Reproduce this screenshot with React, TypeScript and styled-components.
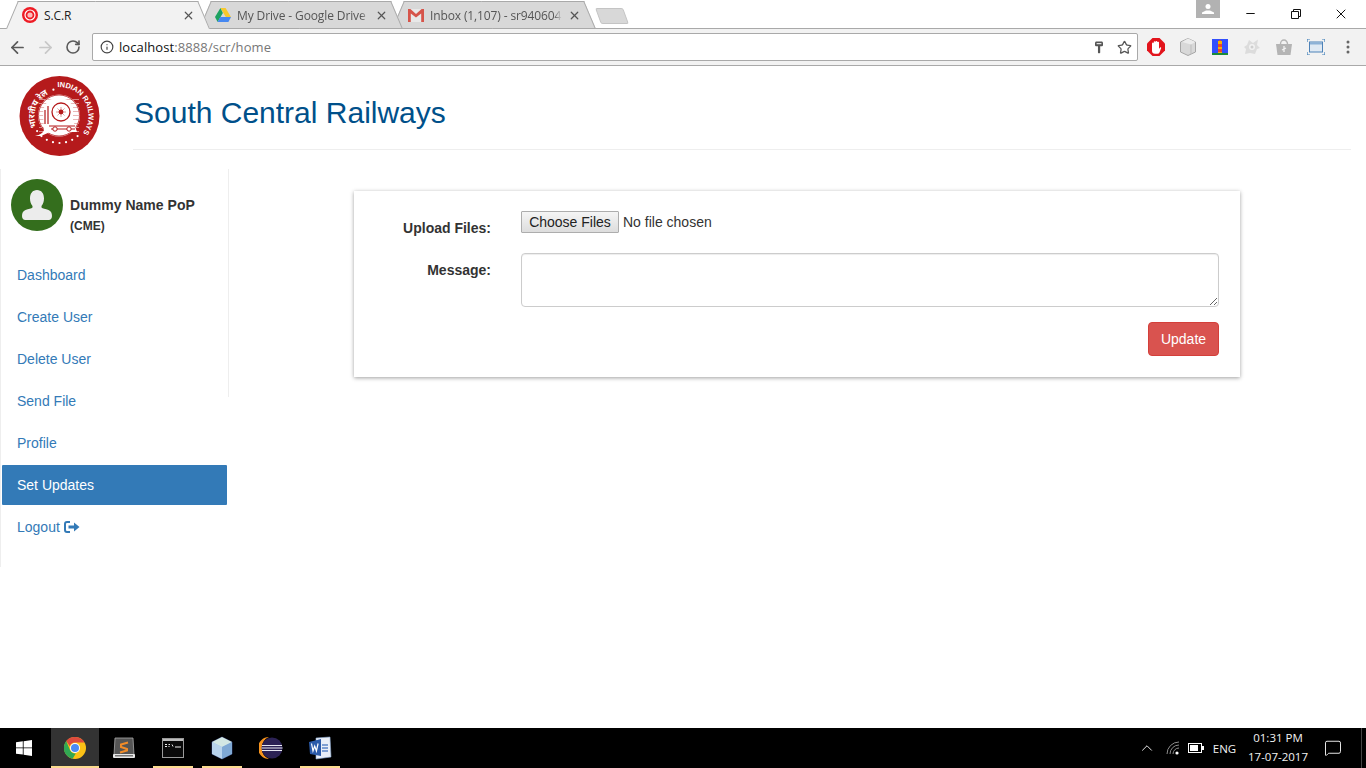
import React from "react";
import styled, { createGlobalStyle } from "styled-components";
import { ArrowLeft, ArrowRight, RotateCw, Info, Star, X, Minus, ChevronUp, MessageSquare } from "lucide-react";

const Global = createGlobalStyle`
  html, body { margin: 0; padding: 0; background: #fff; }
  body { font-family: "Liberation Sans", Arial, sans-serif; font-size: 14px; color: #333; overflow: hidden; }
  * { box-sizing: border-box; }
`;

const Shell = styled.div`
  display: flex; flex-direction: column; width: 1366px; height: 768px; overflow: hidden;
`;

/* ---------- browser chrome ---------- */
const TabStrip = styled.div`
  display: flex; height: 28px; padding: 0 2px 0 6px; background: #fff; flex: none; position: relative; z-index: 2;
`;
const Tab = styled.div<{ $active?: boolean; $z: number }>`
  position: relative; width: 204px; height: 29px; margin-right: -11px; padding: 0 0 0 16px; flex: none;
  display: flex; align-items: center; gap: 6px; z-index: ${(p) => p.$z}; padding-top: 1px;
  &::before, &::after {
    content: ""; position: absolute; top: 1px; bottom: 0; width: 50%; z-index: -1;
    background: ${(p) => (p.$active ? "#f2f2f2" : "#d8d8d8")};
    border-top: 1px solid #a9a9a9;
    ${(p) => (p.$active ? "" : "border-bottom: 1px solid #a9a9a9;")}
  }
  &::before { left: 0; transform-origin: bottom left; transform: skewX(-23deg); border-left: 1px solid #a9a9a9; }
  &::after { right: 0; transform-origin: bottom right; transform: skewX(23deg); border-right: 1px solid #a9a9a9; }
`;
const TabTitle = styled.span<{ $active?: boolean }>`
  width: 132px; flex: none; font-family: "Open Sans", "Liberation Sans", sans-serif; font-size: 12px; letter-spacing: -.12px; white-space: nowrap; overflow: hidden;
  color: ${(p) => (p.$active ? "#222" : "#555")};
  ${(p) => (p.$active ? "" : "-webkit-mask-image: linear-gradient(90deg, #000 94%, transparent);")}
`;
const TabClose = styled.span`
  display: flex; color: #555;
`;
const NewTab = styled.div`
  width: 28px; height: 16px; margin: 8px 0 0 13px; flex: none; background: #d8d8d8; border: 1px solid #c4c4c4; border-radius: 2px; transform: skewX(20deg);
`;
const Spacer = styled.div` flex: 1; `;
const ProfileBadge = styled.div`
  width: 24px; height: 18px; background: #b2b2b2; display: flex; align-items: center; justify-content: center; flex: none; margin-right: 8px;
`;
const WinButton = styled.div`
  width: 45.5px; height: 28px; display: flex; align-items: center; justify-content: center; color: #111; flex: none; padding-bottom: 1px;
`;
const Toolbar = styled.div`
  height: 38px; flex: none; display: flex; align-items: center; padding: 0 2px 0 3px; background: #f2f2f2;
  border-top: 1px solid #a9a9a9; border-bottom: 1px solid #a9a9a9; position: relative; z-index: 1;
`;
const NavIcon = styled.div<{ $dim?: boolean }>`
  width: 28px; display: flex; justify-content: center; color: ${(p) => (p.$dim ? "#c8c8c8" : "#5a5a5a")}; flex: none;
`;
const Omnibox = styled.div`
  flex: 1; height: 28px; margin: 0 2px 0 5px; padding: 0 5px 0 7px; background: #fff; border: 1px solid #a9a9a9; border-radius: 2px;
  display: flex; align-items: center; gap: 5px;
`;
const Url = styled.div`
  flex: 1; font-family: "Open Sans", "Liberation Sans", sans-serif; font-size: 13px; color: #777; white-space: nowrap; letter-spacing: .09px;
  b { font-weight: 400; color: #111; }
`;
const ExtIcon = styled.div`
  width: 32px; height: 32px; display: flex; align-items: center; justify-content: center; flex: none;
`;
const OmniActions = styled.div`
  display: flex; align-items: center; gap: 14px; color: #555;
`;

/* ---------- page ---------- */
const Page = styled.div`
  flex: 1; min-height: 0; display: flex; flex-direction: column; background: #fff;
`;
const Header = styled.header`
  height: 103px; flex: none; display: flex; padding: 10px 15px 0 19px;
`;
const LogoBox = styled.div`
  width: 114px; flex: none; height: 81px;
`;
const TitleBlock = styled.div`
  flex: 1; height: 74px; border-bottom: 1px solid #eee; display: flex; align-items: center; padding: 0 0 1px 1px;
`;
const Title = styled.h1`
  margin: 0; font-size: 30px; font-weight: 400; line-height: 1.1; color: #00508a;
`;
const Main = styled.div`
  display: flex; align-items: flex-start;
`;
const Sidebar = styled.aside`
  position: relative; width: 229px; flex: none; border-left: 1px solid #eee; padding-bottom: 20px;
  &::after { content: ""; position: absolute; top: 0; right: 0; width: 1px; height: 228px; background: #eee; }
`;
const Profile = styled.div`
  height: 86px; display: flex; padding: 10px 0 0 10px; gap: 7px;
`;
const Avatar = styled.div`
  width: 52px; height: 52px; border-radius: 50%; background: #346e1d; flex: none; display: flex; align-items: center; justify-content: center; overflow: hidden;
`;
const ProfileText = styled.div`
  padding-top: 16px; font-weight: 700; color: #333;
`;
const ProfileName = styled.div`
  font-size: 14px; line-height: 20px; letter-spacing: .03px;
`;
const ProfileRole = styled.div`
  font-size: 12px; line-height: 14px; margin-top: 4px;
`;
const Nav = styled.nav`
  display: flex; flex-direction: column; gap: 2px; padding: 0 2px 0 1px;
`;
const NavLink = styled.a<{ $active?: boolean }>`
  height: 40px; padding: 10px 15px; line-height: 20px; font-size: 14px; border-radius: 1px; display: flex; align-items: center; gap: 4px;
  color: ${(p) => (p.$active ? "#fff" : "#337ab7")};
  background: ${(p) => (p.$active ? "#337ab7" : "transparent")};
`;
const Content = styled.main`
  flex: 1; padding: 22px 0 0 125px;
`;
const Card = styled.section`
  width: 886px; padding: 20px 21px 21px; background: #fff; box-shadow: 0 1px 4px rgba(0,0,0,.38);
  display: grid; grid-template-columns: 116px 698px; column-gap: 30px;
`;
const FieldLabel = styled.label`
  font-weight: 700; font-size: 14px; line-height: 20px; padding-top: 7px; text-align: right; color: #333; white-space: nowrap;
`;
const FieldCell = styled.div<{ $gap?: number }>`
  margin-bottom: ${(p) => p.$gap ?? 15}px;
`;
const FileInput = styled.input`
  display: block; height: 22px; width: 300px; font-family: "Liberation Sans", Arial, sans-serif; font-size: 14px; line-height: 20px; color: #333; margin: 0 0 5px;
  &::file-selector-button {
    height: 22px; width: 98px; margin: 0 4px 0 0; padding: 0 0 2px; font: inherit; color: #222; border: 1px solid #adadad; border-radius: 1px;
    background: linear-gradient(#f5f5f5, #dddddd);
  }
`;
const MessageBox = styled.textarea`
  display: block; width: 698px; height: 54px; border: 1px solid #ccc; border-radius: 4px; background: #fff; box-shadow: inset 0 1px 1px rgba(0,0,0,.075); resize: vertical; outline: none; margin: 0;
`;
const ActionRow = styled.div`
  grid-column: 2; display: flex; justify-content: flex-end;
`;
const DangerButton = styled.button`
  width: 71px; height: 34px; padding: 0; font-family: "Liberation Sans", Arial, sans-serif; font-size: 14px; color: #fff; background: #d9534f; border: 1px solid #d43f3a; border-radius: 4px;
`;

/* ---------- taskbar ---------- */
const Taskbar = styled.footer`
  height: 40px; flex: none; background: #000; display: flex; align-items: stretch; color: #fff;
`;
const StartBox = styled.div`
  width: 51px; display: flex; align-items: center; justify-content: center; padding-right: 3px; flex: none;
`;
const TaskItem = styled.div<{ $active?: boolean; $open?: boolean }>`
  position: relative; flex: none; display: flex; align-items: center; justify-content: center;
  width: ${(p) => (p.$active ? 48 : 49)}px;
  margin-right: ${(p) => (p.$active ? 1 : 0)}px;
  padding-right: ${(p) => (p.$active ? 0 : 1)}px;
  background: ${(p) => (p.$active ? "#333" : "transparent")};
  &::after {
    content: ""; position: absolute; bottom: 0; height: 2px; background: #fbdb8f;
    left: ${(p) => (p.$active ? "0" : "4px")}; right: ${(p) => (p.$active ? "0" : "5px")};
    display: ${(p) => (p.$open ? "block" : "none")};
  }
`;
const TrayBox = styled.div<{ $w: number }>`
  width: ${(p) => p.$w}px; flex: none; display: flex; align-items: center; justify-content: center; color: #fff;
`;
const TrayText = styled.span`
  font-family: "Open Sans", "Noto Sans", sans-serif; font-size: 11.500px; color: #f2f2f2;
`;
const Clock = styled.div`
  font-family: "Open Sans", "Noto Sans", sans-serif; font-size: 11.500px; line-height: 19px; color: #f2f2f2; text-align: center; white-space: nowrap; padding-bottom: 2px;
`;
const DesktopEdge = styled.div`
  width: 13px; flex: none; position: relative;
  &::after { content: ""; position: absolute; left: 8px; top: 0; bottom: 0; width: 1px; background: #444; }
`;

/* ---------- drawings ---------- */
const ScrFavicon = () => (
  <svg width="16" height="16" viewBox="0 0 16 16"><circle cx="8" cy="8" r="8" fill="#ee1c25" /><circle cx="8" cy="8" r="5" fill="none" stroke="#fff" strokeWidth="1.2" /><circle cx="8" cy="8" r="2.6" fill="#fbb" /></svg>
);
const DriveIcon = () => (
  <svg width="16" height="14" viewBox="0 0 16 14"><path d="M5.4 0h5.2l5.4 9h-5.2z" fill="#f7c82c" /><path d="M5.4 0 0 9l2.6 5 5.3-9z" fill="#1da261" /><path d="M2.6 14h10.8l2.6-5H5.3z" fill="#4688f1" /></svg>
);
const GmailIcon = () => (
  <svg width="16" height="13" viewBox="0 0 16 13"><path d="M2 0h12v13H2z" fill="#e8e8e8" /><path d="M0 0h2.4L8 5 13.6 0H16v13h-2.8V4.4L8 8.600 2.800 4.400V13H0z" fill="#d6544a" /></svg>
);
const KeyIcon = () => (
  <svg width="8" height="13" viewBox="0 0 10 15"><path d="M0 1.5 1 0h8l1 1.5V5L9 6H6.5v8l-1.5 1-1.3-1V6H1L0 5z" fill="#555" /><rect x="2" y="2" width="6" height="1.4" fill="#f2f2f2" /></svg>
);
const OperaStop = () => (
  <svg width="18" height="18" viewBox="0 0 18 18"><path d="M5.5 0h7L18 5.5v7L12.5 18h-7L0 12.5v-7z" fill="#e2141c" /><path d="M5 8V5.5a1 1 0 0 1 1.7-.3V4a1 1 0 0 1 1.8-.3 1 1 0 0 1 1.9.2 1 1 0 0 1 1.6.7V11c1-2 2.2-2 2.2-1l-1.6 4.2a2.5 2.5 0 0 1-2.3 1.5H8a3 3 0 0 1-3-3z" fill="#fff" /></svg>
);
const CubeIcon = () => (
  <svg width="18" height="18" viewBox="0 0 18 18"><path d="M9 .5 16.5 4v10L9 17.5 1.5 14V4z" fill="#d8d8d8" stroke="#a6a6a6" /><path d="M9 .5 16.5 4 12 6.5 3 4z" fill="#ececec" /><path d="M12 6.5V16" stroke="#bdbdbd" /></svg>
);
const LighthouseIcon = () => (
  <svg width="16" height="16" viewBox="0 0 16 16"><rect width="16" height="16" fill="#304ffe" /><rect y="14" width="16" height="2" fill="#1b8a3a" /><rect x="6" y="2" width="4" height="12" fill="#f4b400" /><rect x="6" y="5" width="4" height="3" fill="#ea4335" /><rect x="6" y="10" width="4" height="3" fill="#ea4335" /><path d="M6.5 2 8 .5 9.500 2z" fill="#ea4335" /></svg>
);
const AvastIcon = () => (
  <svg width="18" height="18" viewBox="0 0 18 18"><path d="M6 2 10 5l5-3.500-1 5.500 3 3-3 1-2 5-5-1-5 1 1-5-2-2 3-2z" fill="#dcdcdc" /><circle cx="9" cy="9" r="3" fill="#f2f2f2" /><circle cx="9" cy="9" r="1.500" fill="#cfcfcf" /></svg>
);
const BagIcon = () => (
  <svg width="18" height="18" viewBox="0 0 18 18"><path d="M1 6h16l-1.500 11h-13z" fill="#b4b4b4" /><path d="M5.500 6a3.500 4 0 0 1 7 0" fill="none" stroke="#b4b4b4" strokeWidth="1.400" /><path d="M9 8v6M7 12l4-2" stroke="#f2f2f2" strokeWidth="1.300" /></svg>
);
const CaptureIcon = () => (
  <svg width="18" height="16" viewBox="0 0 18 16"><rect x="2.500" y="3" width="13" height="10" fill="#dfe9f3" stroke="#4d82b8" /><rect x="3" y="3.500" width="12" height="2" fill="#8cb1d6" /><path d="M0 3V0h3M15 0h3v3M18 13v3h-3M3 16H0v-3" fill="none" stroke="#3f7fb8" strokeWidth="1.200" /></svg>
);
const KebabIcon = () => (
  <svg width="4" height="14" viewBox="0 0 4 14"><circle cx="2" cy="2" r="1.500" fill="#666" /><circle cx="2" cy="7" r="1.500" fill="#666" /><circle cx="2" cy="12" r="1.500" fill="#666" /></svg>
);
const RestoreIcon = () => (
  <svg width="10" height="10" viewBox="0 0 10 10"><path d="M2.500 2.500V.5h7v7h-2M.5 2.500h7v7h-7z" fill="none" stroke="#111" /></svg>
);
const UserGlyph = () => (
  <svg width="12" height="10" viewBox="0 0 12 10"><circle cx="6" cy="2.500" r="2.500" fill="#fff" /><path d="M0 10V8.500L4 6.500h4l4 2V10z" fill="#fff" /></svg>
);
const AvatarPerson = () => (
  <svg width="30" height="30" viewBox="0 0 30 30"><path d="M15 0c4.500 0 7 3.500 7 8.500 0 3-1 5.500-2.500 7.500v1.500c1 1 4 1.500 7 2.500 2.500 1 3.500 3 3.500 6 0 2-1 4-3.500 4H3.500C1 30 0 28 0 26c0-3 1-5 3.500-6 3-1 6-1.500 7-2.500V16C9 14 8 11.500 8 8.500 8 3.500 10.500 0 15 0z" fill="#ececec" /></svg>
);
const LogoutIcon = () => (
  <svg width="16" height="12" viewBox="0 0 16 12"><path d="M6 1H3a2 2 0 0 0-2 2v6a2 2 0 0 0 2 2h3" fill="none" stroke="#337ab7" strokeWidth="2" /><path d="M4.500 4.500H10V1.500L15.500 6 10 10.500v-3H4.500z" fill="#337ab7" /></svg>
);
const RailwaysLogo = () => {
  const dotAngles = [-13, 138, 152, 166, 180, 194, 208, 222, 236];
  const spokes = Array.from({ length: 8 }, (_, i) => i * 22.5);
  return (
    <svg width="81" height="81" viewBox="0 0 81 81">
      <defs>
        <path id="logoUpper" d="M38.500 11.100 A29 29 0 0 1 62.700 58.600" />
        <path id="logoLeft" d="M17.800 51 A25 25 0 0 1 32.800 16.700" />
      </defs>
      <circle cx="40.500" cy="40" r="40" fill="#b51a1c" />
      <text fontFamily="Liberation Sans, sans-serif" fontWeight="700" fontSize="7.400" fill="#fff"><textPath href="#logoUpper">INDIAN RAILWAYS</textPath></text>
      <text fontFamily="Noto Sans, DejaVu Sans, sans-serif" fontWeight="700" fontSize="8.500" fill="#fff"><textPath href="#logoLeft">भारतीय रेल</textPath></text>
      {dotAngles.map((a) => (
        <circle key={a} cx={40.500 + 27 * Math.sin((a * Math.PI) / 180)} cy={40 - 27 * Math.cos((a * Math.PI) / 180)} r="1.100" fill="#fff" />
      ))}
      <circle cx="40" cy="39.500" r="21" fill="#fff" />
      {[-16, -12, -8, -4, 0, 4, 8, 12, 16].map((d) => (
        <line key={d} x1="20" x2="60" y1={39.500 + d} y2={39.500 + d} stroke="#e3a5a5" strokeWidth=".8" />
      ))}
      <circle cx="40" cy="39.500" r="20.500" fill="none" stroke="#b51a1c" strokeWidth=".8" />
      <path d="M25 54 L24 38 Q24 30 30 24 L36 22 Q48 20 54 30 L54 44 L58 56 H31 L22 60 H16 Q24 58 25 54z" fill="#fff" />
      <circle cx="42" cy="36" r="9" fill="#fff" stroke="#b51a1c" strokeWidth="1.300" />
      {spokes.map((a) => (
        <line key={a} x1={42 - 5 * Math.cos((a * Math.PI) / 90)} y1={36 - 5 * Math.sin((a * Math.PI) / 90)} x2={42 + 5 * Math.cos((a * Math.PI) / 90)} y2={36 + 5 * Math.sin((a * Math.PI) / 90)} stroke="#d98a8a" strokeWidth=".5" />
      ))}
      <circle cx="42" cy="36" r="2.400" fill="#b51a1c" />
      <path d="M26 34v14M29 30v18" stroke="#b51a1c" strokeWidth="1.200" />
      <path d="M30 50h26M32 53h24" stroke="#b51a1c" strokeWidth="1.100" />
      <circle cx="36" cy="53" r="2.200" fill="#fff" stroke="#b51a1c" />
      <circle cx="50" cy="53" r="2.200" fill="#fff" stroke="#b51a1c" />
    </svg>
  );
};
const WinLogo = () => (
  <svg width="16" height="16" viewBox="0 0 16 16"><path d="M0 2.300 6.800 1.300v6.200H0zM7.600 1.200 16 0v7.500H7.600zM0 8.300h6.800v6.300L0 13.700zM7.600 8.300H16V16l-8.400-1.200z" fill="#fff" /></svg>
);
const ChromeLogo = () => (
  <svg width="22" height="22" viewBox="0 0 22 22">
    <circle cx="11" cy="11" r="11" fill="#fbc116" />
    <path d="M11 0a11 11 0 0 1 9.500 5.500H11a5.500 5.500 0 0 0-5.200 3.700L2.200 4.100A11 11 0 0 1 11 0z" fill="#dd4b3e" />
    <path d="M2.200 4.100 6.300 13.800a5.500 5.500 0 0 0 5.500 2.700L8.600 21.700A11 11 0 0 1 2.200 4.100z" fill="#31a853" />
    <circle cx="11" cy="11" r="5" fill="#fff" /><circle cx="11" cy="11" r="4" fill="#4a8af4" />
  </svg>
);
const SublimeLogo = () => (
  <svg width="24" height="22" viewBox="0 0 24 22">
    <path d="M3 1h18l1 17H2z" fill="#555" stroke="#aaa" strokeWidth=".8" /><rect x="1" y="17" width="22" height="4" rx="1" fill="#e8e8e8" /><rect x="3" y="18" width="18" height="1.500" fill="#777" />
    <path d="M16 5.500 9 7.500v2.500l6 2v1.500l-7 2" fill="none" stroke="#f28c28" strokeWidth="2" />
  </svg>
);
const CmdLogo = () => (
  <svg width="22" height="20" viewBox="0 0 22 20">
    <rect x=".5" y=".5" width="21" height="19" fill="#0a0a0a" stroke="#9a9a9a" /><rect x="1" y="1" width="20" height="2" fill="#bdbdbd" />
    <path d="M3 6.500h2M3 8.500h2M6.500 6.500h1.500M6.500 8.500h1M10 6.500l1 2M13 9h6" stroke="#eee" strokeWidth="1" />
  </svg>
);
const BoxLogo = () => (
  <svg width="22" height="24" viewBox="0 0 22 24">
    <path d="M11 1 21 6v12l-10 5L1 18V6z" fill="#9cc2e6" stroke="#26305c" strokeWidth="1" /><path d="M11 1 21 6l-10 5L1 6z" fill="#d3e8e4" /><path d="M11 11v12L1 18V6z" fill="#b9d4ec" /><path d="M11 11v12l10-5V6z" fill="#7fa9d4" />
  </svg>
);
const EclipseLogo = () => (
  <svg width="24" height="24" viewBox="0 0 24 24">
    <path d="M10 1A11 11 0 0 0 10 23A12 12 0 0 1 10 1z" fill="#f7941e" /><circle cx="13" cy="12" r="10.500" fill="#2c2255" />
    <path d="M3 9.500h20M2.500 12h21M3 14.500h20" stroke="#e8e8f2" strokeWidth="1.100" />
  </svg>
);
const WordLogo = () => (
  <svg width="24" height="24" viewBox="0 0 24 24">
    <path d="M8 2 22 1l1 20-15 2z" fill="#e9eff8" stroke="#8aa7d0" strokeWidth=".6" /><path d="M1 6 13 3v17L2 18z" fill="#2a5aa9" />
    <path d="M3.500 7.500 5 15l1.700-5 1.700 5 1.700-7.500" fill="none" stroke="#fff" strokeWidth="1.200" /><path d="M14 9h6M14 12h6M14 15h6" stroke="#5c86c6" strokeWidth="1.300" />
  </svg>
);
const WifiIcon = () => (
  <svg width="14" height="14" viewBox="0 0 14 14"><path d="M1 13A12 12 0 0 1 13 1M4 13a9 9 0 0 1 9-9M7 13a6 6 0 0 1 6-6" fill="none" stroke="#8d8d8d" strokeWidth="1" /><circle cx="11" cy="12" r="1.600" fill="#fff" /></svg>
);
const BatteryIcon = () => (
  <svg width="16" height="10" viewBox="0 0 16 10"><rect x=".5" y=".5" width="13" height="9" fill="none" stroke="#fff" /><rect x="2" y="2" width="8" height="6" fill="#fff" /><rect x="14" y="3" width="2" height="4" fill="#fff" /></svg>
);

const tasks = [
  { key: "chrome", node: <ChromeLogo />, active: true, open: true },
  { key: "sublime", node: <SublimeLogo /> },
  { key: "cmd", node: <CmdLogo />, open: true },
  { key: "box", node: <BoxLogo />, open: true },
  { key: "eclipse", node: <EclipseLogo /> },
  { key: "word", node: <WordLogo />, open: true },
];
const navItems = ["Dashboard", "Create User", "Delete User", "Send File", "Profile", "Set Updates"];
const tabs = [
  { title: "S.C.R", icon: <ScrFavicon />, active: true },
  { title: "My Drive - Google Drive", icon: <DriveIcon /> },
  { title: "Inbox (1,107) - sr940604", icon: <GmailIcon /> },
];
const extensions = [<OperaStop key="a" />, <CubeIcon key="b" />, <LighthouseIcon key="c" />, <AvastIcon key="d" />, <BagIcon key="e" />, <CaptureIcon key="f" />, <KebabIcon key="g" />];

export default function App() {
  return (
    <Shell>
      <Global />
      <TabStrip>
        {tabs.map((t, i) => (
          <Tab key={t.title} $active={t.active} $z={t.active ? 5 : 4 - i}>
            {t.icon}
            <TabTitle $active={t.active}>{t.title}</TabTitle>
            <TabClose><X size={13} strokeWidth={2.2} /></TabClose>
          </Tab>
        ))}
        <NewTab />
        <Spacer />
        <ProfileBadge><UserGlyph /></ProfileBadge>
        <WinButton><Minus size={13} strokeWidth={1.9} /></WinButton>
        <WinButton><RestoreIcon /></WinButton>
        <WinButton><X size={16} strokeWidth={1.5} /></WinButton>
      </TabStrip>
      <Toolbar>
        <NavIcon><ArrowLeft size={19} strokeWidth={2.2} /></NavIcon>
        <NavIcon $dim><ArrowRight size={19} strokeWidth={2.2} /></NavIcon>
        <NavIcon><RotateCw size={16} strokeWidth={2.4} /></NavIcon>
        <Omnibox>
          <Info size={14} strokeWidth={2} color="#444" />
          <Url><b>localhost</b>:8888/scr/home</Url>
          <OmniActions>
            <KeyIcon />
            <Star size={15} strokeWidth={2} />
          </OmniActions>
        </Omnibox>
        {extensions.map((e, i) => <ExtIcon key={i}>{e}</ExtIcon>)}
      </Toolbar>
      <Page>
        <Header>
          <LogoBox><RailwaysLogo /></LogoBox>
          <TitleBlock><Title>South Central Railways</Title></TitleBlock>
        </Header>
        <Main>
          <Sidebar>
            <Profile>
              <Avatar><AvatarPerson /></Avatar>
              <ProfileText>
                <ProfileName>Dummy Name PoP</ProfileName>
                <ProfileRole>(CME)</ProfileRole>
              </ProfileText>
            </Profile>
            <Nav>
              {navItems.map((n) => <NavLink key={n} $active={n === "Set Updates"}>{n}</NavLink>)}
              <NavLink>Logout <LogoutIcon /></NavLink>
            </Nav>
          </Sidebar>
          <Content>
            <Card>
              <FieldLabel>Upload Files:</FieldLabel>
              <FieldCell><FileInput type="file" multiple /></FieldCell>
              <FieldLabel>Message:</FieldLabel>
              <FieldCell><MessageBox /></FieldCell>
              <ActionRow><DangerButton>Update</DangerButton></ActionRow>
            </Card>
          </Content>
        </Main>
      </Page>
      <Taskbar>
        <StartBox><WinLogo /></StartBox>
        {tasks.map((t) => <TaskItem key={t.key} $active={t.active} $open={t.open}>{t.node}</TaskItem>)}
        <Spacer />
        <TrayBox $w={26}><ChevronUp size={18} strokeWidth={1.2} /></TrayBox>
        <TrayBox $w={26}><WifiIcon /></TrayBox>
        <TrayBox $w={20}><BatteryIcon /></TrayBox>
        <TrayBox $w={37}><TrayText>ENG</TrayText></TrayBox>
        <TrayBox $w={70}><Clock>01:31 PM<br />17-07-2017</Clock></TrayBox>
        <TrayBox $w={40}><MessageSquare size={18} strokeWidth={1.2} /></TrayBox>
        <DesktopEdge />
      </Taskbar>
    </Shell>
  );
}
